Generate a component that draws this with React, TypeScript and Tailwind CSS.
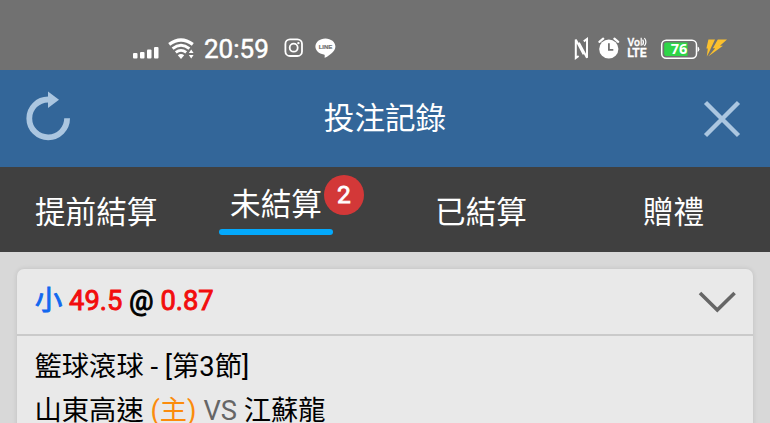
import type { ReactNode } from "react";

const TABS = [
  { id: "early", label: "提前結算", className: "ml-[35px] w-[122px]" },
  { id: "open", label: "未結算", count: 2, className: "ml-[62px] w-[114px]" },
  { id: "settled", label: "已結算", className: "ml-[102px] w-[92px]" },
  { id: "gift", label: "贈禮", className: "ml-[116px] w-[61px]" },
];

function SignalIcon() {
  return (
    <svg className="ml-[133px] h-[14px] w-[26px] mt-[7px] shrink-0" viewBox="0 0 26 14" fill="white">
      <rect x="0" y="8" width="4.5" height="5.5" rx="1" />
      <rect x="7" y="7" width="4.5" height="6.5" rx="1" />
      <rect x="14" y="4.5" width="4.5" height="9" rx="1" />
      <rect x="21" y="2" width="4.5" height="11.5" rx="1" />
    </svg>
  );
}

function WifiIcon() {
  return (
    <svg className="mt-[1px] ml-[9px] h-[22px] w-[27px] shrink-0" viewBox="0 0 27 22" fill="none" stroke="white">
      <path d="M1.2 6.4Q13 -2.4 24.8 6.4" strokeWidth="3.2" />
      <path d="M4.6 10.6Q13 4 21.4 10.6" strokeWidth="3" />
      <path d="M7.8 14.4Q13 10.4 18.2 14.4" strokeWidth="2.8" />
      <path d="M9.8 17.2Q13 14.8 16.2 17.2L13 21Z" fill="white" stroke="none" />
      <path d="M23.2 11.5L25.6 15H20.8ZM23.2 20.5L25.6 17H20.8Z" fill="white" stroke="none" />
    </svg>
  );
}

function InstagramIcon() {
  return (
    <svg className="ml-[16px] h-[20px] w-[20px] shrink-0" viewBox="0 0 20 20" fill="none" stroke="white" strokeWidth="1.8">
      <rect x="1.4" y="1.4" width="16.6" height="16.6" rx="4.6" />
      <circle cx="9.7" cy="9.7" r="4" />
      <circle cx="14.4" cy="5.1" r="1.2" fill="white" stroke="none" />
    </svg>
  );
}

function LineIcon() {
  return (
    <svg className="ml-[11px] h-[20px] w-[21px] shrink-0" viewBox="0 0 21 20">
      <path d="M10.4 .4C4.8 .4 .4 4 .4 8.5c0 4 3.5 7.3 8.4 8 1.2.3 1 1 .8 2.7 0 .6.3.7.9.4C14.5 17.3 20.4 13.4 20.4 8.5 20.4 4 16 .4 10.4 .4Z" fill="white" />
      <text x="10.5" y="10.9" textAnchor="middle" fontSize="6" fontWeight="700" fill="#717171" stroke="#717171" strokeWidth=".2" className="font-['Liberation_Sans',sans-serif]">LINE</text>
    </svg>
  );
}

function NfcIcon() {
  return (
    <svg className="h-[23px] w-[15px] shrink-0" viewBox="0 0 15 23" fill="none" stroke="white" strokeWidth="2">
      <path d="M4.6 19L1.8 21V2.6L9.6 17.4" />
      <path d="M9.8 4.4L13 2V20.8L4.9 5.6" />
    </svg>
  );
}

function AlarmIcon() {
  return (
    <svg className="ml-[9px] h-[22px] w-[22px] shrink-0" viewBox="0 0 22 22">
      <circle cx="10.8" cy="12" r="9.6" fill="white" />
      <path d="M1.4 4.8L5.2 1.6M16.4 1.6L20.2 4.8" stroke="white" strokeWidth="2.2" strokeLinecap="round" />
      <path d="M10.9 6.3V12.8H15.3" fill="none" stroke="#717171" strokeWidth="1.8" />
    </svg>
  );
}

function VolteIcon() {
  return (
    <svg className="ml-[7px] h-[22px] w-[22px] shrink-0 overflow-visible" viewBox="0 0 22 22" fill="white" fontWeight="500">
      <text x="0.5" y="8.8" fontSize="10.5" textLength="12.5" lengthAdjust="spacingAndGlyphs" stroke="white" strokeWidth=".3">Vo</text>
      <path d="M14.2 .8V8.8M15.6 2.6Q17.4 5.2 15.6 8.2M17.4 1Q20.4 5 17.4 9" fill="none" stroke="white" strokeWidth="1.2" />
      <text x="0.2" y="20.4" fontSize="12" textLength="19.5" lengthAdjust="spacingAndGlyphs" stroke="white" strokeWidth=".4">LTE</text>
    </svg>
  );
}

function BatteryIcon() {
  return (
    <svg className="mt-[1px] ml-[11px] h-[20px] w-[40px] shrink-0" viewBox="0 0 40 20">
      <rect x="1.7" y="1.2" width="34.8" height="18" rx="4.5" fill="none" stroke="white" strokeWidth="1.5" />
      <path d="M6.2 3.4H27.5V17H6.2Q4.200 17 4.200 15V5.4Q4.200 3.400 6.200 3.400Z" fill="#2fd548" />
      <path d="M37.6 7.5Q39.3 8 39.3 10.2T37.6 13Z" fill="white" />
      <text x="19" y="15.2" textAnchor="middle" fontSize="14.5" fontWeight="700" fill="white" className="font-['Open_Sans',sans-serif]">76</text>
    </svg>
  );
}

function BoltIcon() {
  return (
    <svg className="ml-[6px] h-[20px] w-[22px] shrink-0" viewBox="0 0 22 20" fill="#fbc02d">
      <path d="M2.4 1.6H9L5.2 9.5L3.2 14L.8 18.5L1.8 10.600H.4Z" />
      <path d="M11.8 1.6H21L14 7.800H17L2.2 18.5L9.200 10.200H6.800Z" />
    </svg>
  );
}

function StatusBar() {
  return (
    <div className="flex h-[70px] items-center bg-[#717171] pt-[26px] text-white">
      <SignalIcon />
      <WifiIcon />
      <span className="mt-[2px] ml-[9px] w-[64px] whitespace-nowrap text-[26px] leading-none [-webkit-text-stroke:0.5px_white]">20:59</span>
      <InstagramIcon />
      <LineIcon />
      <div className="ml-auto flex items-center pr-[42px]">
        <NfcIcon />
        <AlarmIcon />
        <VolteIcon />
        <BatteryIcon />
        <BoltIcon />
      </div>
    </div>
  );
}

function Header({ children }: { children: ReactNode }) {
  return (
    <header className="flex h-[97px] items-center justify-between bg-[#336699] pr-[29px] pl-[26px]">
      <button className="mt-[-7px] w-[46px]" aria-label="refresh">
        <svg className="h-[52px] w-[46px]" viewBox="0 0 46 52" fill="none">
          <path d="M41.1 29.3A18.9 18.9 0 1 1 22.2 10.5" stroke="#abc6e0" strokeWidth="5.8" />
          <path d="M22 2.5L33 10.8L22 19Z" fill="#abc6e0" />
        </svg>
      </button>
      <h1 className="mt-[1px] ml-[-5px] text-[30.6px] leading-none">{children}</h1>
      <button className="w-[38px]" aria-label="close">
        <svg className="h-[38px] w-[38px]" viewBox="0 0 38 38" fill="none" stroke="#abc6e0" strokeWidth="4.4">
          <path d="M2.5 2.5L35.5 35.5M35.5 2.5L2.5 35.5" />
        </svg>
      </button>
    </header>
  );
}

function Tabs() {
  return (
    <nav className="flex h-[85px] bg-[#404040] text-[30.6px] leading-none text-white">
      {TABS.map((tab) => (
        <button key={tab.id} className={`relative shrink-0 whitespace-nowrap ${tab.className}`}>
          {tab.count ? (
            <div className="flex h-full flex-col items-center pt-[23px]">
              <span>{tab.label}</span>
              <span className="mt-[8px] h-[6px] w-full rounded-full bg-[#03a9fc]" />
              <span className="absolute top-[8px] left-[105px] flex size-[40px] items-center justify-center rounded-full bg-[#d33838] text-[24.5px] [-webkit-text-stroke:0.8px_white]">
                {tab.count}
              </span>
            </div>
          ) : (
            <span className="block pt-[7px]">{tab.label}</span>
          )}
        </button>
      ))}
    </nav>
  );
}

function BetCard() {
  return (
    <article className="rounded-t-[7px] bg-[#e9e9e9] text-black shadow-[0_0_5px_rgba(0,0,0,0.12)]">
      <div className="flex h-[67px] items-center justify-between border-b-2 border-[#cacaca] pr-[17px] pl-[18px]">
        <p className="text-[27.3px] leading-none whitespace-nowrap [-webkit-text-stroke:0.9px_currentColor]">
          <span className="text-[#1268ef]">小</span> <span className="text-[#f20d0d]">49.5</span> @ <span className="text-[#f20d0d]">0.87</span>
        </p>
        <svg className="h-[22px] w-[38px]" viewBox="0 0 38 22" fill="none" stroke="#666" strokeWidth="3.6">
          <path d="M2 2L19.3 19L36.6 2" />
        </svg>
      </div>
      <div className="px-[17.5px] pt-[9px] text-[27.3px] leading-[44px] whitespace-nowrap">
        <p>籃球滾球 - [第3節]</p>
        <p>
          山東高速 <span className="text-[#fb8c0c]">(主)</span> <span className="text-[#666]">VS</span> 江蘇龍
        </p>
      </div>
    </article>
  );
}

export default function App() {
  return (
    <div className="h-[423px] w-[770px] overflow-hidden bg-[#d8d8d8] font-[Roboto,'Noto_Sans_CJK_TC',sans-serif]">
      <StatusBar />
      <Header>
        <span className="text-white">投注記錄</span>
      </Header>
      <Tabs />
      <main className="px-[17px] pt-[17px]">
        <BetCard />
      </main>
    </div>
  );
}
